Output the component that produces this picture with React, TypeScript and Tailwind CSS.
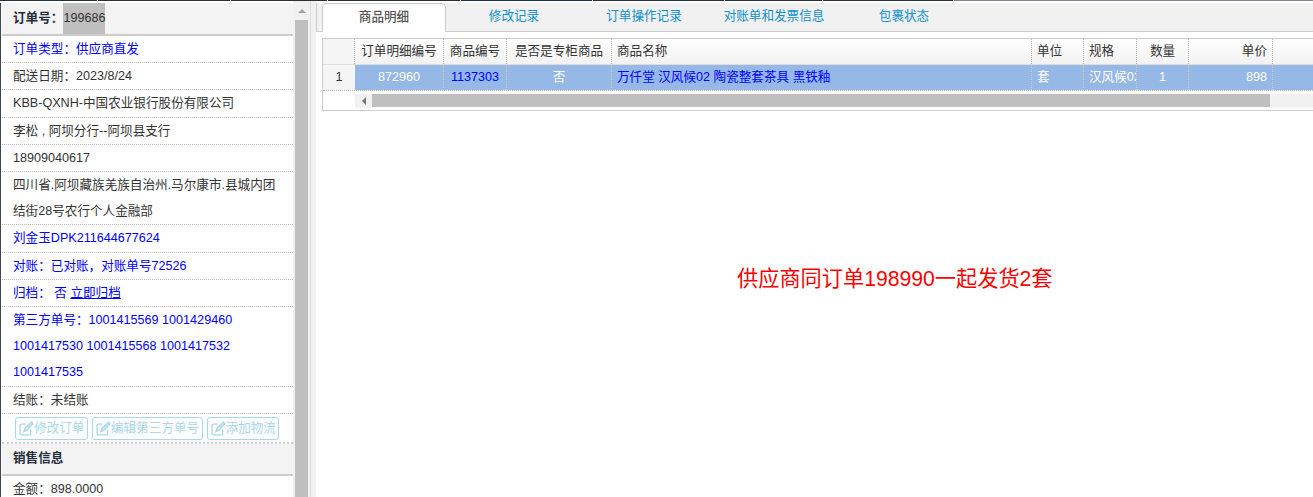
import React from "react";

const Row = ({ children, blue }: { children: React.ReactNode; blue?: boolean }) => (
    <div className={`px-[11px] border-b border-dotted border-[#bbb] leading-[26.2px] ${blue ? "text-[#0000ff]" : "text-[#333]"}`}>
        {children}
    </div>
);

const EditIcon = () => (
    <svg width="15" height="15" viewBox="0 0 14 14" fill="none" stroke="#a8d8ea" strokeWidth="1.2" className="shrink-0">
        <path d="M11 8v4a1 1 0 0 1-1 1H2a1 1 0 0 1-1-1V4a1 1 0 0 1 1-1h4" />
        <path d="M11.5 1 13 2.5 7 9l-2.5.8L5.3 7z" fill="#cfe9f3" />
    </svg>
);

const ActionButton = ({ label }: { label: string }) => (
    <span className="flex items-center h-[23px] pl-[3px] pr-[2.5px] border border-[#a8d8ea] rounded-[3px] text-[#a8d8ea] leading-none whitespace-nowrap">
        <EditIcon />
        {label}
    </span>
);

const Sidebar = () => (
    <div className="w-[293px] shrink-0 border-l border-l-[#3c4650] pl-px">
        <div className="h-[33px] flex items-center pl-[11px] bg-[#f3f3f3] border-b-2 border-[#ccc] font-bold text-[#1f2d3d]">
            订单号：<span className="h-full flex items-center bg-[#bfbfbf] font-normal text-[#333]">199686</span>
        </div>
        <Row blue>订单类型：供应商直发</Row>
        <Row>配送日期：2023/8/24</Row>
        <Row>KBB-QXNH-中国农业银行股份有限公司</Row>
        <Row>李松 , 阿坝分行--阿坝县支行</Row>
        <Row>18909040617</Row>
        <Row>四川省.阿坝藏族羌族自治州.马尔康市.县城内团结街28号农行个人金融部</Row>
        <Row blue>刘金玉DPK211644677624</Row>
        <Row blue>对账：已对账，对账单号72526</Row>
        <Row blue>归档： 否 <span className="underline">立即归档</span></Row>
        <Row blue>第三方单号：1001415569 1001429460 1001417530 1001415568 1001417532 1001417535</Row>
        <Row>结账：未结账</Row>
        <div className="flex gap-[4px] pl-[13px] pt-[3px] h-[30px] border-b-2 border-dotted border-[#ccc]">
            <ActionButton label="修改订单" />
            <ActionButton label="编辑第三方单号" />
            <ActionButton label="添加物流" />
        </div>
        <div className="h-[32px] flex items-center pl-[11px] bg-[#f3f3f3] border-b-2 border-[#ccc] font-bold text-[#1f2d3d]">
            销售信息
        </div>
        <Row>金额：898.0000</Row>
    </div>
);

const Scrollbar = () => (
    <div className="w-[17px] shrink-0 bg-[#f1f1f1] flex flex-col pl-[2px] pt-[8px]">
        <div className="w-[13px] flex justify-center">
            <div className="w-0 h-0 border-x-[4px] border-x-transparent border-b-[4px] border-b-[#a3a3a3]" />
        </div>
        <div className="w-[13px] mt-[7px] flex-1 bg-[#bfbfbf]" />
    </div>
);

const tabs = ["商品明细", "修改记录", "订单操作记录", "对账单和发票信息", "包裹状态"];

const Tabs = () => (
    <div className="flex h-[29px] mt-[2px] bg-[#f1f1f1] border-b border-l border-[#ccc] pl-[5px] gap-[6px]">
        {tabs.map((tab, i) => (
            <div
                key={tab}
                className={`w-[124px] text-center whitespace-nowrap leading-[27px] h-[29px] ${
                    i === 0
                        ? "bg-white border border-[#ccc] border-b-0 rounded-t-[5px] font-medium text-[#555]"
                        : "text-[#0e90d2]"
                }`}
            >
                {tab}
            </div>
        ))}
    </div>
);

const columns = [
    { title: "订单明细编号", w: "w-[89px]", align: "text-center", value: "872960", color: "text-white" },
    { title: "商品编号", w: "w-[63px]", align: "text-center", value: "1137303", color: "text-[#0000ff]" },
    { title: "是否是专柜商品", w: "w-[105px]", align: "text-center", value: "否", color: "text-white" },
    { title: "商品名称", w: "w-[420px]", align: "text-left", value: "万仟堂 汉风候02 陶瓷整套茶具 黑铁釉", color: "text-[#0000ff]" },
    { title: "单位", w: "w-[52px]", align: "text-left", value: "套", color: "text-white" },
    { title: "规格", w: "w-[53px]", align: "text-left", value: "汉风候02", color: "text-white" },
    { title: "数量", w: "w-[52px]", align: "text-center", value: "1", color: "text-white" },
    { title: "单价", w: "w-[84px]", align: "text-right", value: "898", color: "text-white" },
];

const Grid = () => (
    <div className="mt-[6px] ml-[6px] border border-[#ccc] border-r-0 h-[73px] overflow-hidden">
        <div className="flex h-[26px] border-b border-[#ddd] bg-gradient-to-b from-white to-[#f2f2f2]">
            <div className="w-[32px] shrink-0 bg-[#f5f5f5] border-r border-dotted border-[#bbb]" />
            {columns.map((c) => (
                <div
                    key={c.title}
                    className={`${c.w} ${c.align} shrink-0 px-[5px] leading-[24px] whitespace-nowrap overflow-hidden border-r border-dotted border-[#bbb] text-[#333]`}
                >
                    {c.title}
                </div>
            ))}
        </div>
        <div className="flex h-[26px] border-b border-dotted border-[#bbb]">
            <div className="w-[32px] shrink-0 bg-[#f5f5f5] text-center leading-[25px] text-[#333]">1</div>
            <div className="flex flex-1 bg-[#95b8e7]">
                {columns.map((c) => (
                    <div
                        key={c.title}
                        className={`${c.w} ${c.align} ${c.color} shrink-0 px-[5px] leading-[25px] whitespace-nowrap overflow-hidden border-r border-dotted border-[#ccc]`}
                    >
                        {c.value}
                    </div>
                ))}
            </div>
        </div>
        <div className="flex h-[19px] pl-[32px] pt-[3px]">
            <div className="w-[17px] h-[14px] bg-[#f1f1f1] flex items-center justify-center">
                <div className="w-0 h-0 border-y-[4px] border-y-transparent border-r-[4px] border-r-[#777]" />
            </div>
            <div className="w-[898px] h-[13px] bg-[#bfbfbf]" />
            <div className="flex-1 h-[14px] bg-[#f1f1f1]" />
        </div>
    </div>
);

// thin strip left over from the window above
const TopStrip = () => (
    <div className="flex h-px gap-px bg-white shrink-0">
        <div className="w-[97px] bg-[#2b2f36]" />
        <div className="w-[132px] bg-[#2b2f36]" />
        <div className="w-[96px] bg-[#2b2f36]" />
        <div className="w-[132px] bg-[#2b2f36]" />
        <div className="w-[131px] bg-[#1c2f5c]" />
        <div className="w-[131px] bg-[#2b2f36]" />
        <div className="w-[97px] bg-[#2b2f36]" />
        <div className="w-[130px] bg-[#2b2f36]" />
        <div className="flex-1 bg-[#7d8794]" />
    </div>
);

export default function App() {
    return (
        <div className="w-[1313px] h-[497px] overflow-hidden bg-white flex flex-col text-[12.6px] font-['Liberation_Sans','Noto_Sans_CJK_SC',sans-serif]">
            <TopStrip />
            <div className="flex flex-1 min-h-0">
                <div className="flex h-full overflow-hidden shrink-0">
                    <div className="pt-[2px] h-full overflow-hidden">
                        <Sidebar />
                    </div>
                    <Scrollbar />
                </div>
                <div className="w-[6px] shrink-0 bg-[#f1f1f1] border-l border-[#ddd]" />
                <div className="flex-1 min-w-0">
                    <Tabs />
                    <Grid />
                    <div className="mt-[156px] pl-[421px] text-[21.2px] text-[#ff0000] leading-[24px] whitespace-nowrap">
                        供应商同订单198990一起发货2套
                    </div>
                </div>
            </div>
        </div>
    );
}
